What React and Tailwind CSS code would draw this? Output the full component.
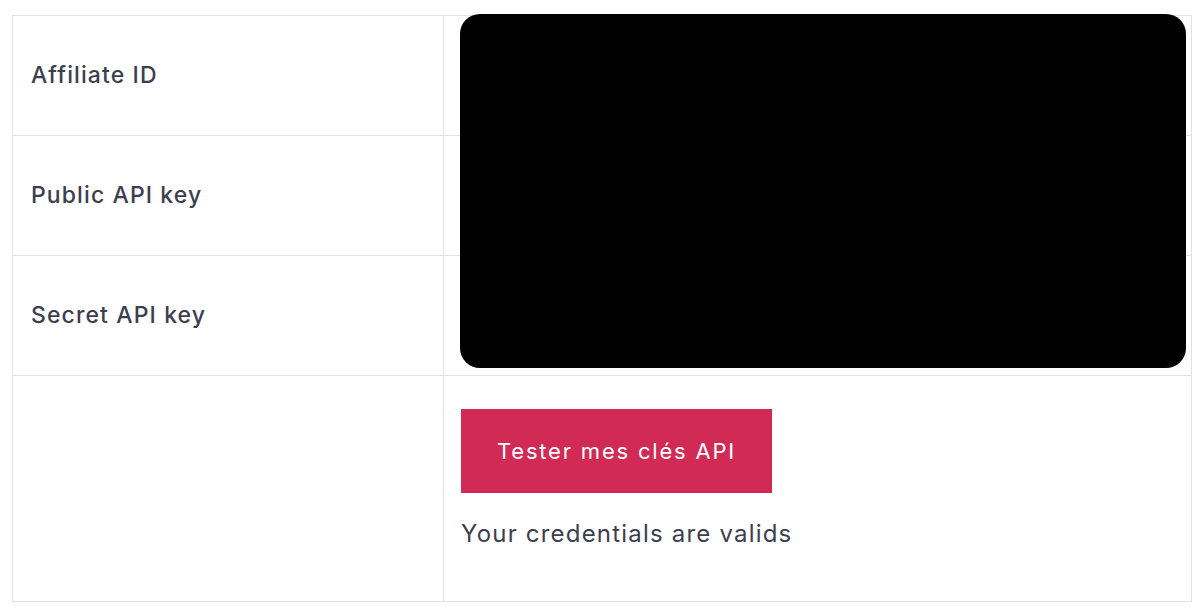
export default function App() {
  const rows = ['Affiliate ID', 'Public API key', 'Secret API key']

  return (
    <div
      className="relative h-[613px] w-[1200px] bg-white px-[12px] pt-[15px]"
      style={{ fontFamily: 'Inter, "Noto Sans", sans-serif' }}
    >
      <table className="w-[1180px] border-collapse text-[#3d3e4f]">
        <tbody>
          {rows.map((label) => (
            <tr key={label} className="h-[120px]">
              <th className="w-[431px] border border-[#e2e2e2] px-[18px] text-left text-[23px] font-medium tracking-[1.1px]">
                {label}
              </th>
              <td className="border border-[#e2e2e2] px-[18px]"></td>
            </tr>
          ))}
          <tr className="h-[226px]">
            <td className="border border-[#e2e2e2]"></td>
            <td className="border border-[#e2e2e2] px-[17px] pt-[33px] align-top">
              <button className="h-[84px] w-[311px] bg-[#d02a55] text-[22px] tracking-[1.8px] text-white">
                Tester mes clés API
              </button>
              <p className="mt-[23px] text-[24px] tracking-[1.2px] text-[#3d3e4f]">Your credentials are valids</p>
            </td>
          </tr>
        </tbody>
      </table>
      <div className="absolute left-[460px] top-[14px] h-[354px] w-[726px] rounded-[20px] bg-black" />
    </div>
  )
}
